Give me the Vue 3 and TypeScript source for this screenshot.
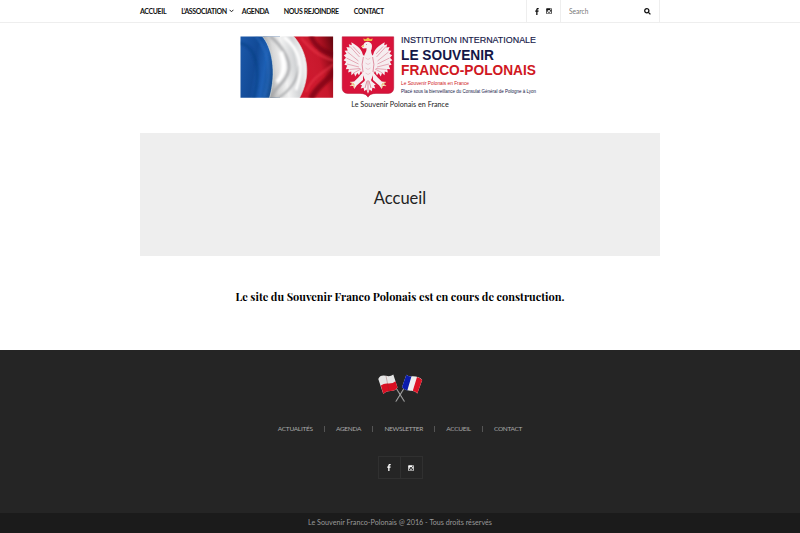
<script setup lang="ts">
interface NavItem {
  label: string
  key: string
  children?: boolean
}

const mainNav: NavItem[] = [
  { label: 'ACCUEIL', key: 'home' },
  { label: 'L’ASSOCIATION', key: 'association', children: true },
  { label: 'AGENDA', key: 'agenda' },
  { label: 'NOUS REJOINDRE', key: 'join' },
  { label: 'CONTACT', key: 'contact' },
]

const footerNav: string[] = ['ACTUALITÉS', 'AGENDA', 'NEWSLETTER', 'ACCUEIL', 'CONTACT']
</script>

<template>
  <div class="page">
    <header class="topbar">
      <div class="container topbar-inner">
        <nav class="main-nav">
          <a v-for="item in mainNav" :key="item.key" :class="['nav-link', item.key]">
            <span>{{ item.label }}</span>
            <svg v-if="item.children" class="chevron" viewBox="0 0 5 4"><path d="M.6 .8 2.5 2.8 4.4 .8" /></svg>
          </a>
        </nav>
        <div class="social">
          <svg class="fb" viewBox="0 0 4 7"><path d="M3.7.1v1.1h-.6c-.5 0-.6.2-.6.6v.8h1.2l-.2 1.1h-1V7H1.2V3.7H.2V2.6h1v-.9C1.2.6 1.9 0 2.8 0z" /></svg>
          <svg class="ig" viewBox="0 0 7 7"><path fill-rule="evenodd" d="M1 .2h5q.8 0 .8.8v5q0 .8-.8.8H1q-.8 0-.8-.8V1Q.2.2 1 .2zM4.8.9v1.2h1.3V.9zM1 3v2.7q0 .3.3.3h4.4q.3 0 .3-.3V3h-.6a2 2 0 1 1-3.8 0zM3.5 2.2a1.3 1.3 0 1 0 0 2.6 1.3 1.3 0 0 0 0-2.6z" /></svg>
        </div>
        <div class="search">
          <input type="text" placeholder="Search" aria-label="Search" />
          <svg viewBox="0 0 7 7"><circle cx="2.8" cy="2.8" r="2.1" /><path d="M4.4 4.4 6.4 6.4" /></svg>
        </div>
      </div>
    </header>

    <div class="brand">
      <svg class="logo" viewBox="240 36 320 62">
        <defs>
          <linearGradient id="blue" x1="0" y1="0" x2="1" y2=".25">
            <stop offset="0" stop-color="#1c59aa" /><stop offset=".45" stop-color="#124a96" />
            <stop offset=".7" stop-color="#1d5fb4" /><stop offset="1" stop-color="#174986" />
          </linearGradient>
          <linearGradient id="white" x1="0" y1=".2" x2="1" y2="0">
            <stop offset="0" stop-color="#999" /><stop offset=".22" stop-color="#d8d8d8" />
            <stop offset=".42" stop-color="#f2f2f2" /><stop offset=".65" stop-color="#d2d4d6" />
            <stop offset=".85" stop-color="#f0f0f0" /><stop offset="1" stop-color="#c5c5c5" />
          </linearGradient>
          <linearGradient id="red" x1="0" y1=".6" x2="1" y2=".2">
            <stop offset="0" stop-color="#d3152b" /><stop offset=".45" stop-color="#cb1a2f" />
            <stop offset=".62" stop-color="#c8182c" /><stop offset=".82" stop-color="#9b0d1c" />
            <stop offset="1" stop-color="#6b0711" />
          </linearGradient>
          <clipPath id="flagArea"><rect x="240.5" y="36.6" width="92.6" height="61.2" /></clipPath>
          <clipPath id="whiteArea"><path d="M262 36C272 47 277 72 269.5 98H299.5C311 77 309 54 293.5 36z" /></clipPath>
          <clipPath id="redArea"><path d="M293.5 36C309 54 311 77 299.5 98H334V36z" /></clipPath>
          <filter id="fold" x="-50%" y="-50%" width="200%" height="200%"><feGaussianBlur stdDeviation="1.3" /></filter>
        </defs>
        <g clip-path="url(#flagArea)">
          <rect x="240" y="36" width="40" height="62" fill="url(#blue)" />
          <g fill="none" filter="url(#fold)">
            <path d="M240 43C255 46 262 67 254 98" stroke="#0c3a7e" stroke-width="3" opacity=".45" />
            <path d="M256 36C271 54 271 76 264 98" stroke="#2a6cc0" stroke-width="2" opacity=".6" />
          </g>
          <path d="M262 36C272 47 277 72 269.5 98H302C312 76 308 52 294 36z" fill="url(#white)" />
          <g clip-path="url(#whiteArea)">
            <g fill="none" filter="url(#fold)">
              <path d="M270 98C274 88 287 82 289 69C290 59 282 46 270 36" stroke="#a6a8aa" stroke-width="3" opacity=".8" />
              <path d="M278 98C291 90 298 80 299 66" stroke="#aaacae" stroke-width="2" />
              <path d="M277 82C283 76 286 66 281 52" stroke="#fff" stroke-width="4" />
              <path d="M284 37C299 49 305 65 296 90" stroke="#fff" stroke-width="3" />
            </g>
          </g>
          <path d="M293.5 36C309 54 311 77 299.5 98H334V36z" fill="url(#red)" />
          <g clip-path="url(#redArea)">
            <g fill="none" filter="url(#fold)">
              <path d="M311 99C316 86 328 82 335 70" stroke="#780510" stroke-width="6" opacity=".75" />
              <path d="M311 35C314 46 324 53 335 54" stroke="#74060f" stroke-width="5" opacity=".7" />
              <path d="M301 38C309 47 318 57 335 61" stroke="#ee3a4c" stroke-width="2" opacity=".6" />
              <path d="M306 92C311 78 322 74 335 63" stroke="#ec3a4b" stroke-width="2" opacity=".6" />
            </g>
          </g>
          <path d="M262 36C272 47 277 72 269.5 98M293.5 36C309 54 311 77 299.5 98" fill="none" stroke="#dfe9e6" stroke-width=".6" />
        </g>

        <path d="M342.2 36.8H393.7V88Q393.7 93 388.5 93.4H376Q369.6 93.5 368 97.2Q366.4 93.5 360 93.4H347.4Q342.2 93 342.2 88z" fill="#d8133a" stroke="#b50e31" stroke-width=".5" />
        <g fill="#f6eef0">
          <path id="wing" d="M362.8 54.5Q361.5 49 357 46Q353.5 43.5 351.3 42.2L351.8 45.2L348.8 44.2L349.6 47.4L346.4 47L347.7 50.4L344.6 50.8L346.5 53.8L343.8 55.3L346 57.8L343.6 60.3L346.2 61.8L344.4 64.8L347.2 65.6L345.8 69.2L348.8 69L348.2 72.6L351.2 71.6L351.4 75.2L354 73L355.2 76.4L357.4 73L359 75.2L361 71L362 73L365 68V57z" />
          <use href="#wing" transform="matrix(-1 0 0 1 736 0)" />
          <path d="M364.4 55Q367 51 366.6 48.2L363 48.4L361.2 46.3L363.6 44.6Q364.4 41.8 367.8 41.8Q372 42.3 372 46.3Q371.9 49 371 50.6Q371 53 372.5 56Q375.5 65 373.3 74.5L371.3 79.5H364.7L362.7 74.5Q360.4 64 364.4 55z" />
          <path d="M363 72L358.3 77.5L354.2 81.4L350 82L352.3 84L349.5 86.1L353.3 86.1L354.3 89L356.7 85.4L363 80zM373 72L377.7 77.5L381.8 81.4L386 82L383.7 84L386.5 86.1L382.7 86.1L381.7 89L379.3 85.4L373 80z" />
          <path d="M365.5 78H370.5L371.4 81L375.8 84.8L374 85.2L375.3 88.5L372.4 87.8L371.7 91.2L369.6 89.6L368 93.7L366.4 89.6L364.3 91.2L363.6 87.8L360.7 88.5L362 85.2L360.2 84.8L364.6 81z" />
        </g>
        <g fill="none" stroke="#ce526d" stroke-width=".45">
          <path id="feathers" d="M350 46.5 359.5 57M347.5 52 358.5 61M346.5 58 358.5 64M347 64 359 67M349.5 69.5 360 68.5M353.5 73 361 69M353 46.5 360 54" />
          <use href="#feathers" transform="matrix(-1 0 0 1 736 0)" />
          <path d="M363.4 57Q361 64 363 72M372.6 57Q375 64 373 72M367 81 365 88M368 80V91M369 81 371 88" stroke-width=".6" />
          <path d="m365.5 58 2.5 1.5 2.5-1.5m-5 5 2.5 1.5 2.5-1.5m-5 5 2.5 1.5 2.5-1.5m-5 5 2.5 1.5 2.5-1.5" opacity=".55" />
        </g>
        <path d="m364.1 41-.9-2.5 2.6.7 2.2-1.8 2.1 1.8 2.7-.7-.9 2.5zM361.1 46.4l2.7-1.5v2z" fill="#efbd45" />
        <path d="m354 84-4-2m4 2-4 2m4-2v4M382 84l4-2m-4 2 4 2m-4-2v4" stroke="#e6b552" stroke-width=".7" fill="none" />
        <circle cx="366.5" cy="44.6" r=".45" fill="#4b2435" />

        <g class="logo-text" fill="#141747">
          <text x="401" y="43.4" font-size="8.9" textLength="135" lengthAdjust="spacingAndGlyphs" stroke="#141747" stroke-width=".15">INSTITUTION INTERNATIONALE</text>
          <text x="401" y="59.6" font-size="14.2" font-weight="700" textLength="93" lengthAdjust="spacingAndGlyphs">LE SOUVENIR</text>
          <text x="401" y="75" font-size="13.8" font-weight="700" fill="#d01722" textLength="135" lengthAdjust="spacingAndGlyphs">FRANCO-POLONAIS</text>
          <text x="401" y="84.5" font-size="4.8" fill="#d01722" textLength="68" lengthAdjust="spacingAndGlyphs">Le Souvenir Polonais en France</text>
          <text x="401" y="93.4" font-size="4.9" textLength="135" lengthAdjust="spacingAndGlyphs">Placé sous la bienveillance du Consulat Général de Pologne à Lyon</text>
        </g>
      </svg>
      <p class="tagline">Le Souvenir Polonais en France</p>
    </div>

    <main class="container">
      <section class="banner"><h1>Accueil</h1></section>
      <h2 class="notice">Le site du Souvenir Franco Polonais est en cours de construction.</h2>
    </main>

    <footer>
      <div class="footer-main">
        <svg class="flags" viewBox="378 374 45 29">
          <g fill="none" stroke-linecap="round">
            <path d="m392.8 383 11.4 18.5M407.5 383l-11.4 18.5" stroke="#575757" stroke-width="1.4" />
            <path d="m393 383 11.2 18M407.3 383l-11.2 18" stroke="#c9c9c9" stroke-width=".65" />
          </g>
          <path d="M378.3 379Q380 374.5 386 375.8Q390.3 377 393.3 374.5L397.5 387.5Q395 391 390.5 391Q386 391 383.3 394Z" fill="#e5e5e5" />
          <path d="M380.9 385.5Q384 383 388 383.5Q393 383.8 395.5 381.2L397.5 387.5Q395 391 390.5 391Q386 391 383.3 394Z" fill="#d80f22" />
          <path d="m386 376 3 15" stroke="#7a3030" stroke-width="1" opacity=".3" />
          <path d="M406.3 374.7Q408.8 376.8 412 376.3Q419 376 422.2 380L417.3 393.4Q414.8 390.3 410.5 390.8Q406 391 402 387.3Z" fill="#eeeeef" />
          <path d="M406.3 374.7Q408.8 376.8 411.5 376.3L407.3 390.5Q404 389.8 402 387.3Z" fill="#0b1cac" />
          <path d="M417 377Q420.5 377.8 422.2 380L417.3 393.4Q415.6 391.3 412.8 390.8Z" fill="#dd1325" />
        </svg>
        <nav class="footer-nav">
          <a v-for="label in footerNav" :key="label">{{ label }}</a>
        </nav>
        <div class="footer-social">
          <span><svg class="fb" viewBox="0 0 4 7"><path d="M3.7.1v1.1h-.6c-.5 0-.6.2-.6.6v.8h1.2l-.2 1.1h-1V7H1.2V3.7H.2V2.6h1v-.9C1.2.6 1.9 0 2.8 0z" /></svg></span>
          <span><svg class="ig" viewBox="0 0 7 7"><path fill-rule="evenodd" d="M1 .2h5q.8 0 .8.8v5q0 .8-.8.8H1q-.8 0-.8-.8V1Q.2.2 1 .2zM4.8.9v1.2h1.3V.9zM1 3v2.7q0 .3.3.3h4.4q.3 0 .3-.3V3h-.6a2 2 0 1 1-3.8 0zM3.5 2.2a1.3 1.3 0 1 0 0 2.6 1.3 1.3 0 0 0 0-2.6z" /></svg></span>
        </div>
      </div>
      <div class="copyright">Le Souvenir Franco-Polonais @ 2016 - Tous droits réservés</div>
    </footer>
  </div>
</template>

<style>
body {
  margin: 0;
  background: #fff;
}
</style>

<style scoped>
.page {
  height: 533px;
  display: flex;
  flex-direction: column;
  overflow: hidden;
  font-family: Lato, "Liberation Sans", sans-serif;
  color: #222;
}
.page * {
  box-sizing: border-box;
}
svg {
  display: block;
}
.container {
  width: 520px;
  margin: 0 auto;
}
.topbar {
  height: 23px;
  flex: none;
  border-bottom: 1px solid #eee;
}
.topbar-inner {
  height: 22px;
  display: flex;
}
.main-nav {
  flex: 1;
  display: flex;
  align-items: center;
  font-size: 7px;
  letter-spacing: -0.38px;
  font-weight: 700;
  color: #111;
  white-space: nowrap;
}
.nav-link {
  display: flex;
  align-items: center;
  gap: 2px;
  margin-right: 15px;
}
.nav-link.association {
  margin-right: 8px;
}
.chevron {
  width: 5px;
  height: 4px;
  fill: none;
  stroke: #222;
  stroke-width: 1;
}
.social {
  width: 34px;
  border-left: 1px solid #eee;
  display: flex;
  align-items: center;
  justify-content: center;
  gap: 7px;
  padding-right: 1px;
}
.fb {
  width: 4px;
  height: 7px;
  fill: #111;
}
.ig {
  width: 6px;
  height: 6px;
  fill: #111;
}
.search {
  width: 100px;
  border-left: 1px solid #eee;
  border-right: 1px solid #eee;
  display: flex;
  align-items: center;
  justify-content: space-between;
  padding: 0 8px;
}
.search input {
  width: 60px;
  padding: 0;
  border: 0;
  outline: 0;
  background: none;
  font: 6.6px Lato, sans-serif;
}
.search input::placeholder {
  color: #777;
}
.search svg {
  width: 7px;
  height: 7px;
  fill: none;
  stroke: #111;
  stroke-width: 1.3;
}
.brand {
  height: 110px;
  flex: none;
  padding-top: 13px;
  display: flex;
  flex-direction: column;
  align-items: center;
}
.logo {
  width: 320px;
  height: 62px;
}
.logo-text {
  font-family: "Liberation Sans", Arial, sans-serif;
}
.tagline {
  margin: 2px 0 0;
  font-size: 7.2px;
  line-height: 9px;
}
.banner {
  height: 123px;
  display: flex;
  align-items: center;
  justify-content: center;
  background: #eee;
}
.banner h1 {
  margin: 6px 0 0;
  font-size: 16.5px;
  font-weight: 400;
  line-height: 20px;
}
.notice {
  margin: 33px 0 0;
  text-align: center;
  font: 700 11px/16px "Playfair Display", "Liberation Serif", serif;
  color: #000;
  white-space: nowrap;
}
footer {
  height: 183px;
  flex: none;
  margin-top: auto;
  background: #252525;
}
.footer-main {
  height: 163px;
  padding-top: 24px;
  display: flex;
  flex-direction: column;
  align-items: center;
}
.flags {
  width: 45px;
  height: 29px;
}
.footer-nav {
  display: flex;
  margin-top: 20px;
  font-size: 6.5px;
  letter-spacing: -0.3px;
  line-height: 11px;
  color: #aaa;
}
.footer-nav a {
  display: flex;
  align-items: center;
}
.footer-nav a + a::before {
  content: "";
  width: 1px;
  height: 6px;
  margin: 0 11px 0 11.3px;
  background: #555;
}
.footer-social {
  width: 45px;
  height: 23px;
  margin-top: 22px;
  display: flex;
  border: 1px solid #303030;
}
.footer-social span {
  flex: 1;
  display: flex;
  align-items: center;
  justify-content: center;
}
.footer-social span + span {
  border-left: 1px solid #303030;
}
.footer-social svg {
  fill: #fff;
}
.copyright {
  height: 20px;
  background: #1b1b1b;
  color: #999;
  text-align: center;
  font-size: 7.2px;
  line-height: 19px;
}
</style>
